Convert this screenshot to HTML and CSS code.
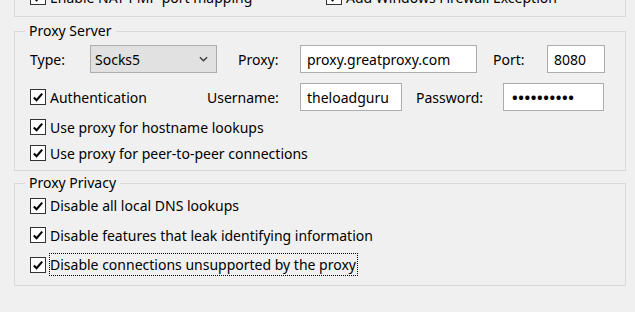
FILE: index.html
```html
<!DOCTYPE html>
<html lang="en">
<head>
    <meta charset="UTF-8">
    <title>Connection - Proxy</title>
    <link rel="stylesheet" href="styles.css">
</head>
<body>

    <div class="panel">

        <!-- Grupo de cima (cortado) -->
        <fieldset class="group group-top">
            <div class="check-row">
                <label class="check check-nat"><span class="box"><svg viewBox="0 0 14 14"><path d="M2.8 7.4 L5.6 10.2 L11.2 3.6"/></svg></span>Enable NAT-PMP port mapping</label>
                <label class="check"><span class="box"><svg viewBox="0 0 14 14"><path d="M2.8 7.4 L5.6 10.2 L11.2 3.6"/></svg></span>Add Windows Firewall Exception</label>
            </div>
        </fieldset>

        <!-- Servidor proxy -->
        <fieldset class="group group-server">
            <legend>Proxy Server</legend>

            <div class="field-row">
                <span class="lbl lbl-type">Type:</span>
                <div class="combo">
                    <span>Socks5</span>
                    <svg viewBox="0 0 10 6"><path d="M1 1 L5 5 L9 1"/></svg>
                </div>
                <span class="lbl lbl-proxy">Proxy:</span>
                <input class="text text-proxy" type="text" value="proxy.greatproxy.com">
                <span class="lbl lbl-port">Port:</span>
                <input class="text text-port" type="text" value="8080">
            </div>

            <div class="field-row second">
                <label class="check check-auth"><span class="box"><svg viewBox="0 0 14 14"><path d="M2.8 7.4 L5.6 10.2 L11.2 3.6"/></svg></span>Authentication</label>
                <span class="lbl lbl-user">Username:</span>
                <input class="text text-user" type="text" value="theloadguru">
                <span class="lbl lbl-pass">Password:</span>
                <input class="text text-pass" type="password" value="secretpass">
            </div>

            <label class="check check-line first"><span class="box"><svg viewBox="0 0 14 14"><path d="M2.8 7.4 L5.6 10.2 L11.2 3.6"/></svg></span>Use proxy for hostname lookups</label>
            <label class="check check-line"><span class="box"><svg viewBox="0 0 14 14"><path d="M2.8 7.4 L5.6 10.2 L11.2 3.6"/></svg></span>Use proxy for peer-to-peer connections</label>
        </fieldset>

        <!-- Privacidade do proxy -->
        <fieldset class="group group-privacy">
            <legend>Proxy Privacy</legend>
            <label class="check check-tall first"><span class="box"><svg viewBox="0 0 14 14"><path d="M2.8 7.4 L5.6 10.2 L11.2 3.6"/></svg></span>Disable all local DNS lookups</label>
            <label class="check check-tall"><span class="box"><svg viewBox="0 0 14 14"><path d="M2.8 7.4 L5.6 10.2 L11.2 3.6"/></svg></span>Disable features that leak identifying information</label>
            <label class="check check-tall"><span class="box"><svg viewBox="0 0 14 14"><path d="M2.8 7.4 L5.6 10.2 L11.2 3.6"/></svg></span><span class="focused">Disable connections unsupported by the proxy</span></label>
        </fieldset>

    </div>

</body>
</html>
```

FILE: styles.css
```css
/* Janela base */
body {
    margin: 0;
    background-color: #f0f0f0;
    font-family: "Noto Sans", "Open Sans", sans-serif;
    font-size: 14px;
    color: #000;
    overflow: hidden;
}

.panel {
    width: 612px;
    margin-left: 14px;
}

/* Group boxes */
.group {
    margin: 0;
    border: 1px solid #d9d9d9;
    padding: 0 0 0 15px;
    min-width: 0;
}

.group legend {
    margin-left: -5px;
    padding: 0 4px;
    line-height: 20px;
}

.group-top {
    margin-top: -30px;
    padding-top: 13px;
    padding-bottom: 6px;
}

.group-server {
    margin-top: 4px;
    padding-top: 4px;
    padding-bottom: 4px;
}

.group-privacy {
    margin-top: 2px;
    padding-top: 0;
    padding-bottom: 5px;
}

/* Linhas de campos */
.check-row,
.field-row {
    display: flex;
    align-items: center;
}

.check-row {
    height: 26px;
}

.field-row {
    height: 28px;
}

.field-row.second {
    margin-top: 10px;
}

.lbl {
    flex: none;
}

.lbl-type  { width: 60px; }
.lbl-proxy { width: 62px; margin-left: 21px; }
.lbl-port  { width: 54px; margin-left: 16px; }
.lbl-user  { width: 93px; }
.lbl-pass  { width: 87px; margin-left: 14px; }

/* Combobox */
.combo {
    box-sizing: border-box;
    width: 127px;
    height: 28px;
    border: 1px solid #adadad;
    background-color: #e1e1e1;
    display: flex;
    align-items: center;
    justify-content: space-between;
    padding: 0 8px 0 4px;
}

.combo svg {
    width: 9px;
    height: 6px;
    fill: none;
    stroke: #404040;
    stroke-width: 1.6;
}

/* Caixas de texto */
.text {
    box-sizing: border-box;
    height: 28px;
    border: 1px solid #adadad;
    background-color: #fff;
    font: inherit;
    color: #000;
    padding: 0 6px;
    margin: 0;
    outline: none;
}

.text-proxy { width: 177px; }
.text-port  { width: 58px; }
.text-user  { width: 102px; }
.text-pass  {
    width: 101px;
    padding-left: 8px;
    font-size: 15px;
    letter-spacing: 0.6px;
    font-weight: bold;
}

/* Checkboxes */
.check {
    display: flex;
    align-items: center;
}

.check-nat  { width: 296px; }
.check-auth { width: 177px; }

.check-line {
    height: 26px;
}

.check-line.first {
    margin-top: 3px;
}

.check-tall {
    height: 29.5px;
}

.check-tall.first {
    margin-top: -2px;
}

.box {
    box-sizing: border-box;
    flex: none;
    width: 16px;
    height: 16px;
    border: 1px solid #333;
    background-color: #fff;
    margin-right: 4px;
    display: flex;
}

.box svg {
    width: 14px;
    height: 14px;
    fill: none;
    stroke: #000;
    stroke-width: 2.1;
}

.focused {
    outline: 1px dotted #000;
    padding: 1px 1px 1px 0;
}
```
